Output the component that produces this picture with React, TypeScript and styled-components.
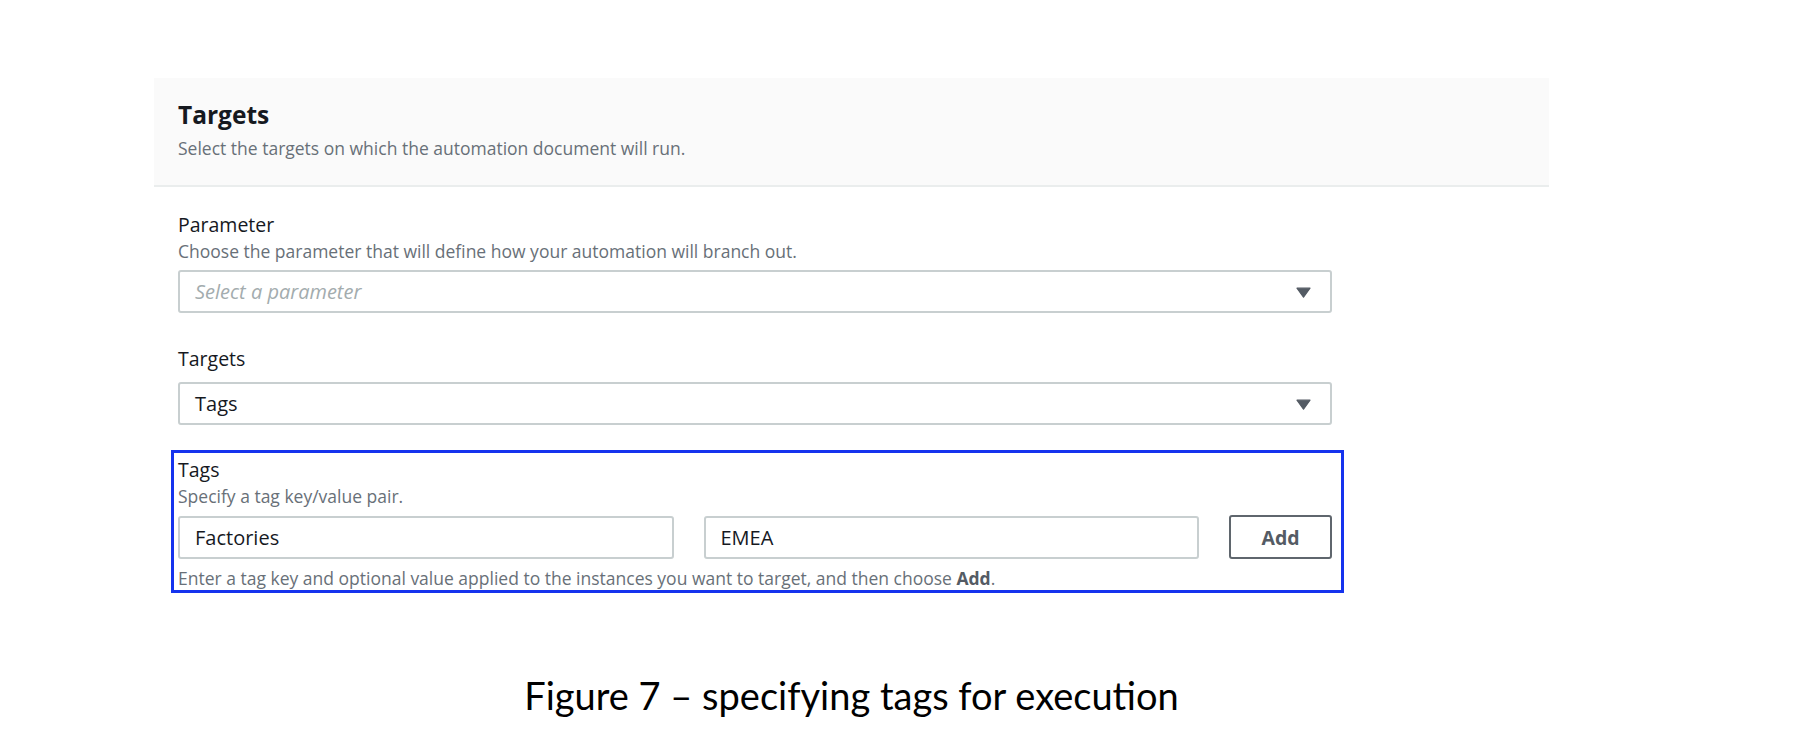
import React from 'react';
import styled, { createGlobalStyle } from 'styled-components';

const GlobalStyle = createGlobalStyle`
  body {
    margin: 0;
    background: #ffffff;
    font-family: "Open Sans", "Noto Sans", sans-serif;
    color: #16191f;
  }
`;

const Page = styled.div`
  width: 1798px;
  height: 744px;
  padding: 78px 0 0 154px;
  box-sizing: border-box;
  overflow: hidden;
`;

const Card = styled.section`
  width: 1395px;
`;

const Header = styled.header`
  background: #fafafa;
  border-bottom: 2px solid #eaeded;
  padding: 22px 24px 25px;
`;

const Title = styled.h2`
  margin: 0;
  font-size: 24.5px;
  line-height: 30px;
  font-weight: 700;
  color: #16191f;
`;

const Description = styled.p<{ $gap?: number }>`
  margin: ${(p) => p.$gap ?? 2}px 0 0;
  font-size: 17.5px;
  line-height: 24px;
  color: #687078;

  b {
    font-weight: 700;
    color: #545b64;
  }
`;

const Body = styled.div`
  padding: 26px 24px 0;
`;

const Field = styled.div<{ $top?: number }>`
  width: 1154px;
  margin-top: ${(p) => p.$top ?? 0}px;
`;

const Label = styled.div`
  font-size: 19.5px;
  line-height: 24px;
  font-weight: 500;
  color: #16191f;
`;

const SelectBox = styled.div<{ $gap: number }>`
  margin-top: ${(p) => p.$gap}px;
  height: 43px;
  box-sizing: border-box;
  border: 2px solid #c8cfd0;
  border-radius: 3px;
  background: #fff;
  display: flex;
  align-items: center;
  justify-content: space-between;
  padding: 0 19px 0 15px;
`;

const Value = styled.span<{ $placeholder?: boolean }>`
  font-size: 20px;
  line-height: 39px;
  font-weight: ${(p) => (p.$placeholder ? 400 : 500)};
  font-style: ${(p) => (p.$placeholder ? 'italic' : 'normal')};
  color: ${(p) => (p.$placeholder ? '#a3acae' : '#16191f')};
`;

const Caret = styled.svg`
  width: 15px;
  height: 11px;
  flex: none;
  margin-top: 2px;
`;

const TagsGroup = styled.div`
  margin: 25px 0 0 -7px;
  width: 1173px;
  box-sizing: border-box;
  border: 3px solid #1533ee;
  padding: 5px 9px 0 4px;
`;

const TagRow = styled.div`
  margin-top: 8px;
  display: grid;
  grid-template-columns: 1fr 1fr 103px;
  column-gap: 30px;
  align-items: center;
`;

const TextInput = styled.div`
  height: 43px;
  box-sizing: border-box;
  border: 2px solid #c8cfd0;
  border-radius: 3px;
  padding: 0 15px;
  display: flex;
  align-items: center;
`;

const AddButton = styled.button`
  height: 44px;
  margin-top: -1px;
  border: 2px solid #5f666d;
  border-radius: 3px;
  background: #fff;
  color: #545b64;
  font-family: "Open Sans", "Noto Sans", sans-serif;
  font-size: 19.5px;
  font-weight: 700;
  padding: 0;
`;

const Caption = styled.p`
  width: 1395px;
  margin: 79px 0 0;
  text-align: center;
  font-family: Lato, "Open Sans", sans-serif;
  font-size: 38px;
  line-height: 46px;
  color: #000;
`;

const DownCaret = () => (
  <Caret viewBox="0 0 15 11">
    <path d="M1 1.2 H14 L7.5 10.2 Z" fill="#545b64" stroke="#545b64" strokeWidth="1.2" strokeLinejoin="round" />
  </Caret>
);

export default function App() {
  return (
    <>
      <GlobalStyle />
      <Page>
        <Card>
          <Header>
            <Title>Targets</Title>
            <Description $gap={6}>Select the targets on which the automation document will run.</Description>
          </Header>
          <Body>
            <Field>
              <Label>Parameter</Label>
              <Description>Choose the parameter that will define how your automation will branch out.</Description>
              <SelectBox $gap={7}>
                <Value $placeholder>Select a parameter</Value>
                <DownCaret />
              </SelectBox>
            </Field>
            <Field $top={34}>
              <Label>Targets</Label>
              <SelectBox $gap={11}>
                <Value>Tags</Value>
                <DownCaret />
              </SelectBox>
            </Field>
            <TagsGroup>
              <Label>Tags</Label>
              <Description>Specify a tag key/value pair.</Description>
              <TagRow>
                <TextInput>
                  <Value>Factories</Value>
                </TextInput>
                <TextInput>
                  <Value>EMEA</Value>
                </TextInput>
                <AddButton type="button">Add</AddButton>
              </TagRow>
              <Description $gap={7}>
                Enter a tag key and optional value applied to the instances you want to target, and then choose{' '}
                <b>Add</b>.
              </Description>
            </TagsGroup>
          </Body>
        </Card>
        <Caption>Figure 7 – specifying tags for execution</Caption>
      </Page>
    </>
  );
}
